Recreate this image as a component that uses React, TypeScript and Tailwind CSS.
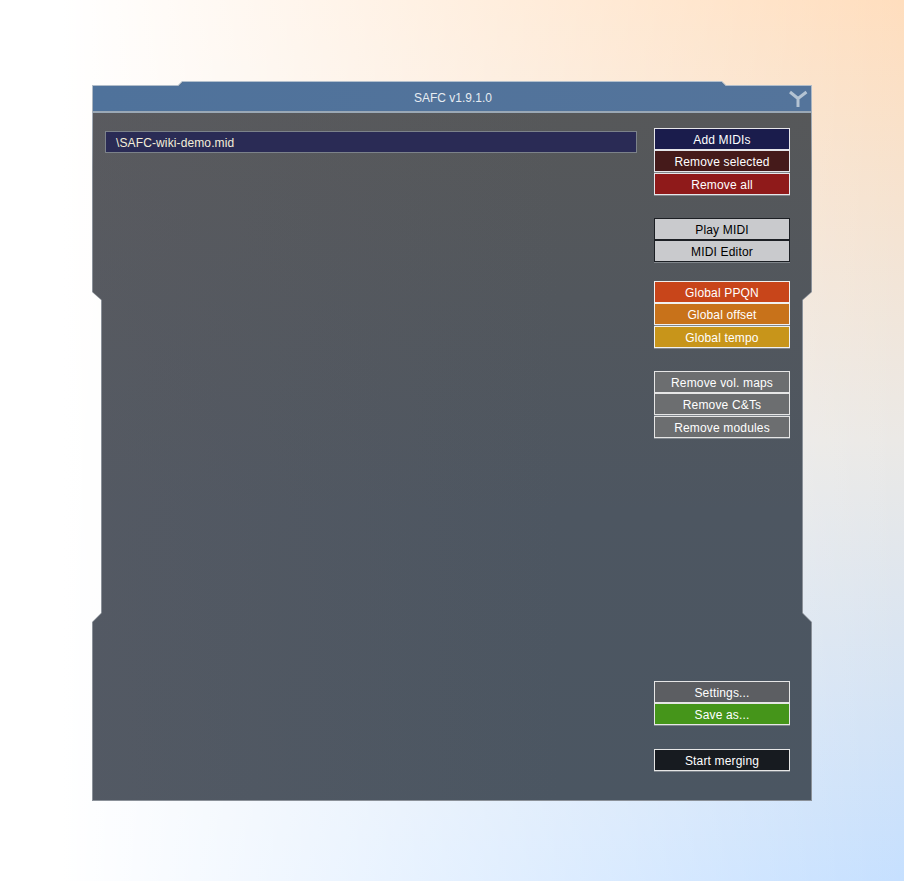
const font = { fontFamily: '"Liberation Sans", Arial, sans-serif' }

const outerShape =
  '[clip-path:polygon(0_4px,86px_4px,90px_0,630px_0,634px_4px,100%_4px,100%_211px,711px_219px,711px_532px,100%_541px,100%_100%,0_100%,0_541px,9px_532px,9px_219px,0_211px)]'
const innerShape =
  '[clip-path:polygon(0_4px,85.6px_4px,89.6px_0,628.4px_0,632.4px_4px,100%_4px,100%_210px,709px_218px,709px_531px,100%_540px,100%_100%,0_100%,0_540px,9px_531px,9px_218px,0_210px)]'

const Btn = ({ label, className }: { label: string; className: string }) => (
  <button
    type="button"
    className={`flex h-[22px] w-[136px] items-center justify-center border pt-[2px] text-[12px] leading-none tracking-[0.16px] shadow-[0_1px_0_rgba(160,165,170,0.6)] ${className}`}
  >
    {label}
  </button>
)

export default function App() {
  return (
    <div
      style={font}
      className="h-[881px] w-[904px] overflow-hidden bg-[linear-gradient(to_right,#ffffff_7%,rgba(255,255,255,0)_100%),linear-gradient(to_bottom,#ffdebe,#ebe9e6_50%,#c6e0ff)] pl-[92px] pt-[81px]"
    >
      <div className={`h-[720px] w-[720px] bg-[linear-gradient(to_bottom,#b4c0cd,#8b9199_12%,#8b9199)] p-px ${outerShape}`}>
        <div className={`flex h-full flex-col bg-[linear-gradient(to_right,rgba(94,94,102,0.4),rgba(74,86,99,0)_65%),linear-gradient(to_bottom,#575859,#4d5661_60%,#4b5662)] ${innerShape}`}>
          <div className="relative flex h-[29px] items-end justify-center bg-[linear-gradient(to_right,#4f729b,#54749b)] pb-[7px] pl-[2px] text-[12px] leading-none text-[#e6ecf2]">
            <span>SAFC v1.9.1.0</span>
            <svg className="absolute right-[3px] top-[7px]" width="20" height="20" viewBox="0 0 20 20" fill="none">
              <path d="M2 3 L10 9.5 L18.5 3 M10 9.5 V18" stroke="#b4c3d3" strokeWidth="3" />
            </svg>
          </div>
          <div className="h-[2px] bg-[#9aa8b6]" />

          <div className="flex min-h-0 flex-1 pl-[12px] pr-[21px]">
            <div className="w-[532px] pt-[18px]">
              <div className="flex h-[22px] items-center border border-[#7c828a] bg-[#2a2b55] pl-[10px] pt-[2px] text-[12px] leading-none tracking-[0.12px] text-[#f3eeda]">
                \SAFC-wiki-demo.mid
              </div>
            </div>

            <div className="ml-[17px] flex w-[136px] flex-col pb-[29px] pt-[15px]">
              <div className="flex flex-col gap-[0.4px]">
                <Btn label="Add MIDIs" className="border-[#e6e6ea] bg-[#1a1c4c] text-white" />
                <Btn label="Remove selected" className="border-[#e6e6ea] bg-[#451a1a] text-white" />
                <Btn label="Remove all" className="border-[#e6e6ea] bg-[#8f1a1a] text-white" />
              </div>
              <div className="mt-[23.2px] flex flex-col gap-[0.4px]">
                <Btn label="Play MIDI" className="border-[#1c1f24] bg-[#c9cacd] text-black" />
                <Btn label="MIDI Editor" className="border-[#1c1f24] bg-[#c9cacd] text-black" />
              </div>
              <div className="mt-[18.6px] flex flex-col gap-[0.5px]">
                <Btn label="Global PPQN" className="border-[#f0f0f0] bg-[#c8451a] text-white" />
                <Btn label="Global offset" className="border-[#f0f0f0] bg-[#c8721a] text-white" />
                <Btn label="Global tempo" className="border-[#f0f0f0] bg-[#c8951a] text-white" />
              </div>
              <div className="mt-[23px] flex flex-col gap-[0.5px]">
                <Btn label="Remove vol. maps" className="border-[#e6e6e6] bg-[#6c6e70] text-white" />
                <Btn label="Remove C&Ts" className="border-[#e6e6e6] bg-[#6c6e70] text-white" />
                <Btn label="Remove modules" className="border-[#e6e6e6] bg-[#6c6e70] text-white" />
              </div>
              <div className="mt-auto flex flex-col gap-[0.5px]">
                <Btn label="Settings..." className="border-[#e6e6e6] bg-[#5c5e62] text-white" />
                <Btn label="Save as..." className="border-[#e6e6e6] bg-[#45951a] text-white" />
              </div>
              <div className="mt-[24px]">
                <Btn label="Start merging" className="border-[#e6e6e6] bg-[#171b20] text-white" />
              </div>
            </div>
          </div>
        </div>
      </div>
    </div>
  )
}
